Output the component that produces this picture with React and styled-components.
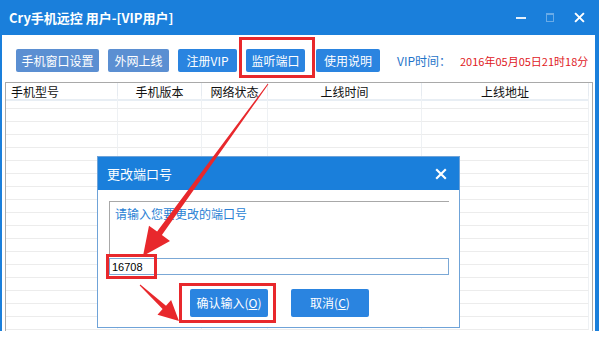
import React from 'react'
import styled, { createGlobalStyle } from 'styled-components'

const BLUE = '#1a7fdb'
const BTN = '#2a84e0'
const RED = '#e8282c'

const GlobalStyle = createGlobalStyle`
  html, body { margin: 0; padding: 0; background: #fff; }
  body { font-family: "Noto Sans CJK SC", "Microsoft YaHei", sans-serif; }
`

const Window = styled.div`
  position: relative;
  width: 599px;
  height: 331px;
  box-sizing: border-box;
  display: flex;
  flex-direction: column;
  border-left: 2px solid ${BLUE};
  border-right: 4px solid ${BLUE};
  overflow: hidden;
`

const TitleBar = styled.div`
  height: 35px;
  flex: none;
  display: flex;
  align-items: center;
  padding-left: 7px;
  background: ${BLUE};
  color: #fff;
  font-size: 13px;
  font-weight: bold;
`

const WinControls = styled.div`
  margin-left: auto;
  display: flex;
  align-items: center;
  gap: 20px;
  padding-right: 10px;
`

const Minus = styled.span`
  width: 10px;
  height: 2px;
  background: #e6f0fb;
`

const MaxBox = styled.span`
  width: 6px;
  height: 6px;
  border: 1px solid rgba(255, 255, 255, 0.35);
  border-top-width: 2px;
`

const Content = styled.div`
  flex: 1;
  display: flex;
  flex-direction: column;
  min-height: 0;
  border-top: 2px solid #fff;
  box-shadow: inset 0 1px 0 #fff, inset 0 3px 0 -2px #e4e4e4;
`

const Toolbar = styled.div`
  display: flex;
  align-items: center;
  gap: 9px;
  height: 23px;
  margin-top: 12px;
  padding-left: 14px;
  white-space: nowrap;
`

const Button = styled.button`
  position: relative;
  flex: none;
  width: ${p => p.$w}px;
  height: ${p => p.$h || 23}px;
  margin-left: ${p => p.$ml || 0}px;
  padding: 0;
  border: none;
  border-radius: 2px;
  background: ${p => (p.$muted ? '#5b8fd2' : BTN)};
  color: #fff;
  font-family: inherit;
  font-size: 12px;
  line-height: 1;
  white-space: nowrap;
`

const Mark = styled.span`
  position: absolute;
  left: ${p => p.$l}px;
  right: ${p => p.$r}px;
  top: ${p => p.$t}px;
  bottom: ${p => p.$b}px;
  border: 3px solid ${RED};
  pointer-events: none;
`

const VipLabel = styled.span`
  flex: none;
  margin-left: 8px;
  color: #1f74c9;
  font-size: 12px;
`

const VipDate = styled.span`
  flex: none;
  color: #e0201e;
  font-size: 11px;
`

const Table = styled.div`
  flex: 1;
  min-height: 0;
  margin: 10px 2px 0 3px;
  border: 1px solid #a9a9a9;
  border-bottom: none;
  overflow: hidden;
  display: grid;
  grid-template-columns: 112px 84px 66px 154px 167px;
  grid-auto-rows: 13px;
  align-content: start;
`

const HeadCell = styled.div`
  height: 18px;
  box-sizing: border-box;
  display: flex;
  align-items: center;
  justify-content: ${p => (p.$left ? 'flex-start' : 'center')};
  padding-left: ${p => (p.$left ? 5 : 0)}px;
  border-right: 1px solid #e6ebf1;
  border-bottom: 2px solid #e8eef4;
  font-size: 12px;
  color: #111;
`

const Cell = styled.div`
  border-right: 1px solid #eef1f4;
  border-bottom: 1px solid #ececec;
`

const Dialog = styled.div`
  position: absolute;
  left: 95px;
  top: 156px;
  width: 363px;
  height: 172px;
  box-sizing: border-box;
  border: 1px solid #6fa3d8;
  background: #fff;
  display: flex;
  flex-direction: column;
`

const DialogTitle = styled.div`
  height: 33px;
  flex: none;
  display: flex;
  align-items: center;
  justify-content: space-between;
  padding: 0 12px 0 9px;
  background: ${BLUE};
  color: #fff;
  font-size: 13px;
`

const DialogBody = styled.div`
  padding: 11px 10px 0 11px;
  display: flex;
  flex-direction: column;
`

const PromptBox = styled.div`
  height: 53px;
  box-sizing: border-box;
  border-top: 1px solid #a8a8a8;
  border-left: 1px solid #a8a8a8;
  padding: 3px 0 0 5px;
  color: #2a7fd4;
  font-size: 12px;
`

const Input = styled.div`
  position: relative;
  height: 17px;
  margin-top: 4px;
  box-sizing: border-box;
  border: 1px solid #7ba8d6;
  display: flex;
  align-items: center;
  padding-left: 2px;
  font-family: "Liberation Sans", Arial, sans-serif;
  font-size: 11px;
  color: #000;
`

const Actions = styled.div`
  display: flex;
  gap: 23px;
  margin-top: 14px;
  padding-left: 81px;
`

const Key = styled.span`
  text-decoration: underline;
`

const Arrows = styled.svg`
  position: absolute;
  left: -2px;
  top: 0;
  pointer-events: none;
`

const headers = [
  { t: '手机型号', left: true },
  { t: '手机版本' },
  { t: '网络状态' },
  { t: '上线时间' },
  { t: '上线地址' },
]

function CloseIcon({ size = 11 }) {
  return (
    <svg width={size} height={size} viewBox="0 0 10 10">
      <path d="M1 1 L9 9 M9 1 L1 9" stroke="#fff" strokeWidth="1.8" />
    </svg>
  )
}

export default function App() {
  const rows = Array.from({ length: 18 })
  return (
    <>
      <GlobalStyle />
      <Window>
        <TitleBar>
          Cry手机远控 用户-[VIP用户]
          <WinControls>
            <Minus />
            <MaxBox />
            <CloseIcon />
          </WinControls>
        </TitleBar>
        <Content>
          <Toolbar>
            <Button $w={83} $muted>手机窗口设置</Button>
            <Button $w={61} $muted>外网上线</Button>
            <Button $w={59}>注册VIP</Button>
            <Button $w={59}>
              监听端口
              <Mark $l={-7} $r={-10} $t={-12} $b={-6} />
            </Button>
            <Button $w={64} $ml={2}>使用说明</Button>
            <VipLabel>VIP时间：</VipLabel>
            <VipDate>2016年05月05日21时18分</VipDate>
          </Toolbar>
          <Table>
            {headers.map(h => (
              <HeadCell key={h.t} $left={h.left}>{h.t}</HeadCell>
            ))}
            {rows.map((_, i) =>
              headers.map(h => <Cell key={i + h.t} />)
            )}
          </Table>
        </Content>

        <Dialog>
          <DialogTitle>
            更改端口号
            <CloseIcon size={12} />
          </DialogTitle>
          <DialogBody>
            <PromptBox>请输入您要更改的端口号</PromptBox>
            <Input>
              16708
              <Mark $l={-4} $r={291} $t={-5} $b={-5} />
            </Input>
            <Actions>
              <Button $w={78} $h={28}>
                确认输入(<Key>O</Key>)
                <Mark $l={-11} $r={-8} $t={-6} $b={-6} />
              </Button>
              <Button $w={78} $h={28}>
                取消(<Key>C</Key>)
              </Button>
            </Actions>
          </DialogBody>
        </Dialog>

        <Arrows width="599" height="344" viewBox="0 0 599 344">
          <polygon
            fill={RED}
            points="268.4,84.3 161.9,235.1 170,241 143,256 149,225.7 157.1,231.5 267.6,83.7"
          />
          <polygon
            fill={RED}
            points="139.7,285.4 162.6,309.1 157.5,314.8 179,321 171.1,300 166,305.7 140.3,284.6"
          />
        </Arrows>
      </Window>
    </>
  )
}
